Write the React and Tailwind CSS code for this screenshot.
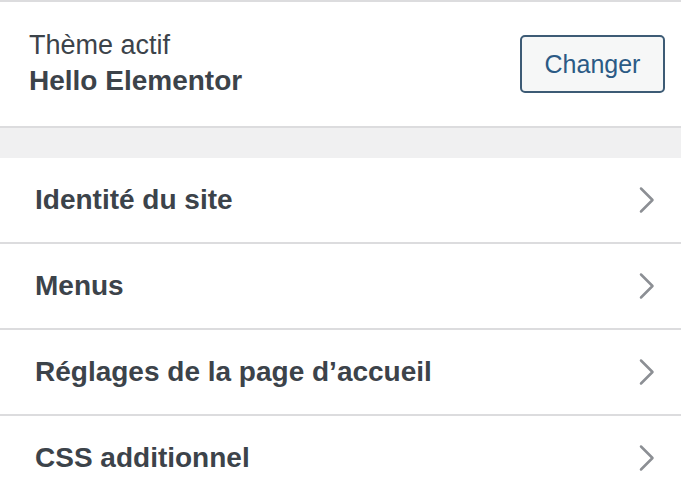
import React from 'react';

const sections = [
    'Identité du site',
    'Menus',
    "Réglages de la page d’accueil",
    'CSS additionnel',
];

const Chevron = () => (
    <svg width="18" height="28" viewBox="0 0 18 28" fill="none">
        <path d="M3 2.5 L14.5 14 L3 25.5" stroke="#8c8f94" strokeWidth="2.5" strokeLinecap="round" strokeLinejoin="round" />
    </svg>
);

const App = () => {
    return (
        <div className="w-[681px] h-[496px] overflow-hidden bg-white border-t-2 border-[#dcdcde] font-['Liberation_Sans',Arial,sans-serif] text-[#3c434a]">
            {/* active theme */}
            <div className="h-[126px] flex items-center justify-between pl-[29px] pr-[16px] border-b-2 border-[#dcdcde]">
                <div className="flex flex-col -mt-[3px]">
                    <span className="text-[27px] leading-[36px]">Thème actif</span>
                    <span className="text-[28px] leading-[36px] font-bold">Hello Elementor</span>
                </div>
                <button className="w-[145px] h-[58px] rounded-[5px] border-2 border-[#3d5b75] bg-[#f6f7f7] text-[#2b5a85] text-[25px] leading-none">
                    Changer
                </button>
            </div>

            <div className="h-[30px] bg-[#f0f0f1]"></div>

            {sections.map((title) => (
                <div
                    key={title}
                    className="h-[86px] flex items-center justify-between pl-[35px] pr-[25px] border-b-2 border-[#dcdcde]"
                >
                    <span className="text-[28px] font-bold">{title}</span>
                    <Chevron />
                </div>
            ))}
        </div>
    );
};

export default App;
